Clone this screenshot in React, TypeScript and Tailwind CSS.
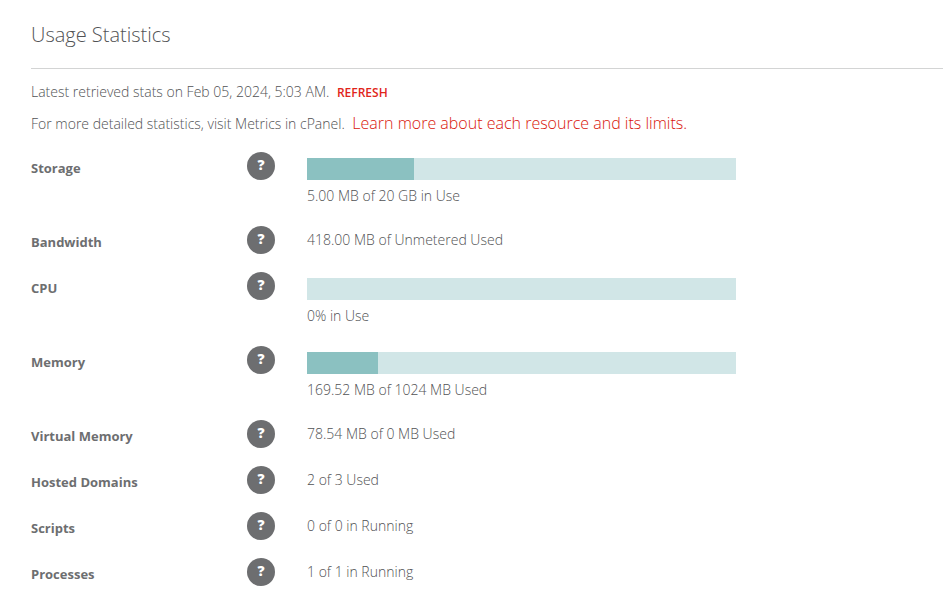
type Stat = {
  label: string;
  value: string;
  used?: number;
};

const stats: Stat[] = [
  { label: "Storage", value: "5.00 MB of 20 GB in Use", used: 25 },
  { label: "Bandwidth", value: "418.00 MB of Unmetered Used" },
  { label: "CPU", value: "0% in Use", used: 0 },
  { label: "Memory", value: "169.52 MB of 1024 MB Used", used: 16.55 },
  { label: "Virtual Memory", value: "78.54 MB of 0 MB Used" },
  { label: "Hosted Domains", value: "2 of 3 Used" },
  { label: "Scripts", value: "0 of 0 in Running" },
  { label: "Processes", value: "1 of 1 in Running" },
];

function StatBar({ label, used }: { label: string; used: number }) {
  return (
    <div
      role="progressbar"
      aria-label={label}
      aria-valuenow={used}
      aria-valuemin={0}
      aria-valuemax={100}
      className="mt-1.5 mb-1.5 h-[22px] bg-[#d1e6e7]"
    >
      <div className="h-full bg-[#8bc1c1]" style={{ width: `${used}%` }} />
    </div>
  );
}

function StatRow({ label, value, used }: Stat) {
  return (
    <div className="flex items-start pb-[18px]">
      <dt className="flex w-[276px] shrink-0 items-start">
        <span className="w-[216px] pt-1.5 text-[13px] leading-5 font-bold text-[#6d6e70]">{label}</span>
        <button
          type="button"
          aria-label={`About ${label}`}
          className="flex size-7 items-center justify-center rounded-full bg-[#6d6e70] pb-0.5 text-sm leading-5 font-extrabold text-white"
        >
          ?
        </button>
      </dt>
      <dd className="max-w-[429px] flex-1 text-sm">
        {used === undefined ? (
          <p className="pt-1 leading-5">{value}</p>
        ) : (
          <>
            <StatBar label={label} used={used} />
            <p className="pb-0.5 leading-5">{value}</p>
          </>
        )}
      </dd>
    </div>
  );
}

export default function App() {
  return (
    <main className="bg-white pl-[31px] font-['Open_Sans','Noto_Sans',sans-serif] font-light text-[#515254]">
      <h1 className="border-b border-[#d3d4d4] pt-[21px] pb-[19px] text-xl leading-7 font-light">Usage Statistics</h1>
      <p className="mt-[13px] text-sm leading-5">
        Latest retrieved stats on Feb 05, 2024, 5:03 AM.{" "}
        <button type="button" className="ml-1 text-xs leading-5 font-semibold text-[#e1251b]">
          REFRESH
        </button>
      </p>
      <p className="mt-2.5 text-sm leading-5">
        For more detailed statistics, visit Metrics in cPanel.{" "}
        <a href="#limits" className="ml-1 text-base leading-5 text-[#d9150b]">
          Learn more about each resource and its limits.
        </a>
      </p>
      <dl className="mt-[18px]">
        {stats.map((stat) => (
          <StatRow key={stat.label} {...stat} />
        ))}
      </dl>
    </main>
  );
}
